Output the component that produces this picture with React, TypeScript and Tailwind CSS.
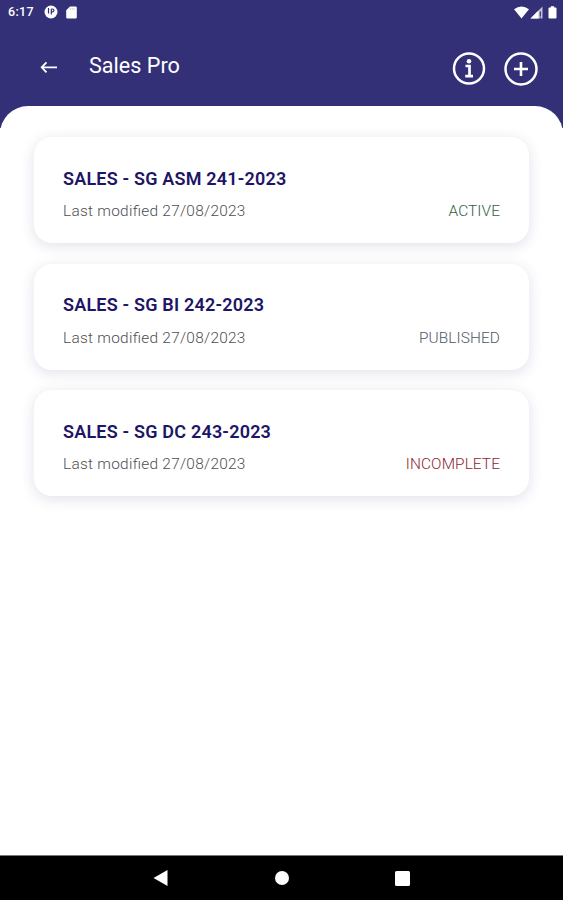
import { useState } from 'react';

type Quote = {
  id: number;
  title: string;
  modified: string;
  status: 'ACTIVE' | 'PUBLISHED' | 'INCOMPLETE';
};

const quotes: Quote[] = [
  { id: 241, title: 'SALES - SG ASM 241-2023', modified: '27/08/2023', status: 'ACTIVE' },
  { id: 242, title: 'SALES - SG BI 242-2023', modified: '27/08/2023', status: 'PUBLISHED' },
  { id: 243, title: 'SALES - SG DC 243-2023', modified: '27/08/2023', status: 'INCOMPLETE' },
];

const statusColors = {
  ACTIVE: 'text-[#2f6044]',
  PUBLISHED: 'text-[#4c5867]',
  INCOMPLETE: 'text-[#8c262f]',
};

function StatusBar() {
  return (
    <div className="flex h-6 items-center justify-between pl-2 pr-[6px] text-white">
      <div className="flex items-center">
        <span className="w-[36px] text-[12.5px] font-medium leading-6 tracking-[0.3px]">6:17</span>
        <svg width="14" height="14" viewBox="0 0 14 14">
          <circle cx="7" cy="7" r="6.5" fill="#fff" />
          <path d="M4.500 3v5.500M7.300 4v5.500M7.300 4h1.200a1.400 1.400 0 0 1 0 2.800H7.300" fill="none" stroke="#333078" strokeWidth="1.200" />
        </svg>
        <svg className="ml-[8px]" width="11" height="13" viewBox="0 0 11 13">
          <path d="M4 .5h5.500a1.300 1.300 0 0 1 1.300 1.300v9.400a1.300 1.300 0 0 1-1.300 1.300h-8A1.300 1.300 0 0 1 .2 11.200V4.300z" fill="#fff" />
          <path d="M4.200 2v2M6.200 2v2M8.200 2v2" stroke="#333078" strokeWidth=".7" opacity=".35" />
        </svg>
      </div>
      <div className="flex items-center">
        <svg width="15" height="13" viewBox="0 0 15 13">
          <path d="M0 3.300Q7.500-2.300 15 3.300L7.500 12.500z" fill="#fff" />
        </svg>
        <svg className="ml-[1px]" width="13" height="13" viewBox="0 0 13 13">
          <path d="M12.500.5v12H.5z" fill="#fff" opacity=".7" />
          <path d="M8.500 4.500v8h-8z" fill="#fff" />
          <path d="M10.300 5.500v5M10.300 11.500v1" stroke="#333078" strokeWidth="1.200" />
        </svg>
        <svg className="ml-[5px]" width="9" height="13" viewBox="0 0 9 13">
          <path d="M2.800.3h3.400v1.200h1.300q1 0 1 1v9q0 1-1 1h-6q-1 0-1-1v-9q0-1 1-1h1.300z" fill="#fff" />
        </svg>
      </div>
    </div>
  );
}

function Header() {
  return (
    <div className="flex h-[82px] items-center pl-10 pr-[25px] text-white">
      <button aria-label="Back" className="mt-[4px]">
        <svg width="18" height="14" viewBox="0 0 18 14" fill="none" stroke="#fff" strokeWidth="1.800">
          <path d="M17 7.300H2M6.500 2.300 1.700 7.300l4.800 5" />
        </svg>
      </button>
      <h1 className="ml-[31px] mt-[2px] text-[21.6px] leading-[26px]">Sales Pro</h1>
      <div className="ml-auto mt-[8px] flex gap-[18px]">
        <button aria-label="Information">
          <svg width="34" height="34" viewBox="0 0 34 34" fill="none" stroke="#fff">
            <circle cx="17" cy="16.500" r="15" strokeWidth="2.500" />
            <path d="M13.500 14h4v10M13.200 24.200h7.800" strokeWidth="2.700" />
            <circle cx="17" cy="9.300" r="2.300" fill="#fff" stroke="none" />
          </svg>
        </button>
        <button aria-label="Add">
          <svg width="34" height="34" viewBox="0 0 34 34" fill="none" stroke="#fff">
            <circle cx="17" cy="17" r="15.500" strokeWidth="2.500" />
            <path d="M17 10v14M10 17h14" strokeWidth="2.600" />
          </svg>
        </button>
      </div>
    </div>
  );
}

function QuoteCard({ quote, onClick }: { quote: Quote; onClick: () => void }) {
  return (
    <div
      onClick={onClick}
      className="h-[106px] rounded-[18px] bg-white px-[29px] pt-[30.8px] shadow-[0_3px_14px_rgba(50,48,120,0.15)]"
    >
      <h2 className="text-[18px] font-semibold leading-[22px] tracking-[0.2px] text-[#1d1566]">{quote.title}</h2>
      <div className="mt-[11.4px] flex justify-between text-[15.4px] font-[350] leading-5">
        <span className="tracking-[0.28px] text-[#4c4f52] [font-feature-settings:'liga']">Last modified {quote.modified}</span>
        <span className={`tracking-[0.1px] ${statusColors[quote.status]}`}>{quote.status}</span>
      </div>
    </div>
  );
}

function NavigationBar() {
  return (
    <div className="flex h-[45px] items-center justify-between border-t border-[#777] bg-black px-[153px]">
      <svg width="15" height="16" viewBox="0 0 15 16">
        <path d="M.5 8 14.500 0v16z" fill="#fff" />
      </svg>
      <svg width="14" height="14" viewBox="0 0 14 14">
        <circle cx="7" cy="7" r="7" fill="#fff" />
      </svg>
      <svg width="15" height="15" viewBox="0 0 15 15">
        <rect width="15" height="15" rx="1.500" fill="#fff" />
      </svg>
    </div>
  );
}

export default function App() {
  const [selected, setSelected] = useState<number | null>(null); // Track the opened quote

  return (
    <div className="flex h-[900px] w-[563px] flex-col overflow-hidden bg-white font-[Roboto,sans-serif]">
      <div className="h-[128px] shrink-0 bg-[#333078]">
        <StatusBar />
        <Header />
      </div>
      <main className="-mt-[22px] flex flex-1 flex-col gap-[20.6px] rounded-t-[28px] bg-white px-[34px] pt-[31px]">
        {quotes.map((quote) => (
          <QuoteCard key={quote.id} quote={quote} onClick={() => setSelected(quote.id === selected ? null : quote.id)} />
        ))}
      </main>
      <NavigationBar />
    </div>
  );
}
